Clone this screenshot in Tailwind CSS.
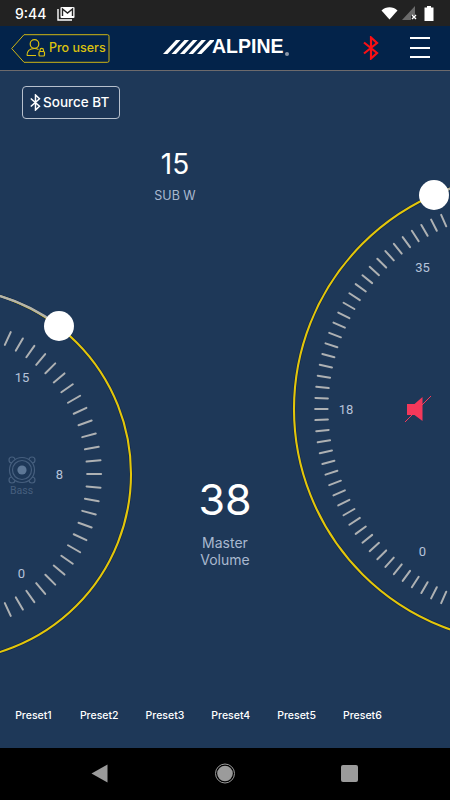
<!DOCTYPE html>
<html lang="en">
<head>
    <meta charset="UTF-8">
    <meta name="viewport" content="width=device-width, initial-scale=1.0">
    <title>Alpine</title>
    <script src="https://cdn.jsdelivr.net/npm/@tailwindcss/browser@4"></script>
</head>
<body class="bg-black">
    <div class="relative w-[450px] h-[800px] overflow-hidden flex flex-col bg-[#1e3858] font-[Inter,sans-serif] text-white">

        <!-- dials -->
        <svg class="absolute inset-0 w-[450px] h-[800px] font-[Roboto,sans-serif]" viewBox="0 0 450 800" fill="none">
            <g id="ticks" stroke="#aeb1b3" stroke-width="2" stroke-linecap="round"></g>
            <circle cx="-55.4" cy="474" r="186.4" stroke="#10264a" stroke-width="3.4"/>
            <circle cx="-55.4" cy="474" r="186.4" stroke="#e3c60a" stroke-width="2.1"/>
            <path d="M-2 295.5 A186.4 186.4 0 0 1 59 326" stroke="#b4b4ac" stroke-width="2.4"/>
            <circle cx="527.6" cy="409" r="233.6" stroke="#10264a" stroke-width="3.4"/>
            <circle cx="527.6" cy="409" r="233.6" stroke="#e3c60a" stroke-width="2.1"/>
            <path d="M434 195 A233.6 233.6 0 0 1 452 188" stroke="#b4b4ac" stroke-width="2.4"/>
            <circle cx="59" cy="326" r="15" fill="#fff"/>
            <circle cx="434" cy="195" r="15" fill="#fff"/>

            <g fill="#b6c3da" font-size="13" text-anchor="middle" dominant-baseline="central">
                <text x="22" y="377">15</text>
                <text x="59.5" y="474.5">8</text>
                <text x="21.5" y="573">0</text>
                <text x="422.5" y="267">35</text>
                <text x="346" y="409.5">18</text>
                <text x="422.5" y="551.5">0</text>
            </g>

            <!-- bass speaker -->
            <g stroke="#465f7e" stroke-width="1.2">
                <circle cx="12" cy="460" r="3"/>
                <circle cx="32" cy="460" r="3"/>
                <circle cx="12" cy="480" r="3"/>
                <circle cx="32" cy="480" r="3"/>
                <circle cx="22" cy="470" r="12.5" fill="#1e3858"/>
                <circle cx="22" cy="470" r="9.5"/>
            </g>
            <circle cx="22" cy="470" r="4.6" fill="#5d7796"/>
            <text x="21.5" y="490.5" fill="#465f7e" font-size="10.5" text-anchor="middle" dominant-baseline="central">Bass</text>

            <!-- muted -->
            <path d="M407 404H414.5L422.5 397V421L414.5 415H407Z" fill="#f4385a"/>
            <path d="M405 422L431 396" stroke="#f4385a" stroke-width="1"/>
        </svg>

        <!-- status bar -->
        <div class="relative h-[26px] shrink-0 bg-[#222222] flex items-center pl-[15px] pr-[16px]">
            <span class="text-[14px] font-medium w-[42px]">9:44</span>
            <svg class="w-[18px] h-[15px]" viewBox="0 0 18 15" fill="none">
                <path d="M1 3V14H15" stroke="#fff" stroke-width="1.4"/>
                <rect x="3.5" y="1" width="14" height="11" rx="1" fill="#fff"/>
                <path d="M5.5 10V3L10.5 7L15.5 3V10" stroke="#222" stroke-width="1.4"/>
            </svg>
            <div class="ml-auto flex items-center gap-[3px]">
                <svg class="w-[17px] h-[13px]" viewBox="0 0 17 13"><path d="M0.5 3.5C5 -0.7 12 -0.7 16.5 3.5L8.5 12.5Z" fill="#fff"/></svg>
                <svg class="w-[16px] h-[14px] ml-[1px]" viewBox="0 0 16 14">
                    <path d="M0 14L13 0V9H9V14Z" fill="#6a6a6a"/>
                    <path d="M10 9L14 13M14 9L10 13" stroke="#fff" stroke-width="1.4"/>
                </svg>
                <svg class="w-[10px] h-[15px] ml-[3px]" viewBox="0 0 10 15">
                    <path d="M3 0H7V1.5H9.5V15H0.5V1.5H3Z" fill="#fff"/>
                </svg>
            </div>
        </div>

        <!-- app bar -->
        <div class="relative h-[45px] shrink-0 bg-[#03234a] border-b border-[#6d6a6c] flex items-center pl-[11px]">
            <div class="relative w-[99px] h-[29px] flex items-center pl-[15px] gap-[2px] text-[#dcc20f]">
                <svg class="absolute inset-0" width="99" height="29" viewBox="0 0 99 29" fill="none">
                    <path d="M0.7 14.5L13 0.7H96.5Q98 0.7 98 2.2V26.8Q98 28.3 96.5 28.3H13Z" stroke="#cfb513" stroke-width="1"/>
                </svg>
                <svg class="w-[20px] h-[20px] shrink-0" viewBox="0 0 20 20" fill="none" stroke="#dcc20f" stroke-width="1.2">
                    <circle cx="8.5" cy="6" r="4.3"/>
                    <path d="M1 17.5C1 13 4 10.5 8.5 10.5C10 10.5 11.5 11 12.5 11.6M1 17.5H10"/>
                    <rect x="13" y="13.5" width="5.5" height="4.5" rx="1"/>
                    <path d="M14 13.5V12.2A1.7 1.7 0 0 1 17.5 12.2V13.5"/>
                </svg>
                <span class="text-[12.5px] font-medium leading-none ml-[1px]">Pro users</span>
            </div>

            <div class="absolute left-[163px] top-[11px] flex items-center">
                <svg class="w-[51px] h-[16px]" viewBox="0 0 51 16" fill="#fff">
                    <path d="M0 15H4.5L17.5 1H13Z"/>
                    <path d="M8.5 15H13L26 1H21.5Z"/>
                    <path d="M17 15H21.5L34.5 1H30Z"/>
                    <path d="M25.5 15H30L43 1H38.5Z"/>
                    <path d="M34 15H38.5L51 2V1H47Z"/>
                </svg>
                <span class="ml-[-2px] font-['Liberation_Sans'] font-bold text-[19.5px] leading-none">ALPINE</span>
                <span class="w-[4px] h-[4px] rounded-full bg-[#8c97a8] self-end mb-[1px] ml-[1px]"></span>
            </div>

            <svg class="absolute left-[362px] top-[10px] w-[18px] h-[24px]" viewBox="0 0 18 24" fill="none" stroke="#fa0f14" stroke-width="2.2">
                <path d="M2 6.5L15 17L9 22.5V1.5L15 7L2 17.5"/>
            </svg>

            <div class="absolute left-[410px] top-[11px] w-[20px] h-[21px] flex flex-col justify-between">
                <div class="h-[2px] bg-white"></div>
                <div class="h-[2px] bg-white"></div>
                <div class="h-[2px] bg-white"></div>
            </div>
        </div>

        <!-- content -->
        <div class="relative flex-1 flex flex-col">
            <div class="mt-[15px] ml-[22px] w-[98px] h-[33px] rounded-[4px] border border-[#b7c0cd] bg-[#1c3556] flex items-center pl-[7px]">
                <svg class="w-[11px] h-[17px] shrink-0" viewBox="0 0 11 17" fill="none" stroke="#fff" stroke-width="1.5">
                    <path d="M0.8 4.5L9.5 12.2L5.5 16V1L9.5 4.8L0.8 12.5"/>
                </svg>
                <span class="text-[13.5px] font-medium leading-none ml-[2px]">Source BT</span>
            </div>

            <div class="w-[100px] ml-[125px] mt-[28px] flex flex-col items-center">
                <span class="text-[28px] leading-[34px]">15</span>
                <span class="text-[12.5px] leading-[16px] mt-[7px] text-[#a9b8cf]">SUB W</span>
            </div>

            <div class="w-[100px] ml-[175px] mt-[269px] flex flex-col items-center">
                <span class="text-[43px] leading-[52px]">38</span>
                <span class="text-[14px] leading-[17px] mt-[9px] text-center text-[#a9b8cf]">Master<br>Volume</span>
            </div>

            <div class="mt-auto mb-[25px] pl-[0.5px] flex text-[10.5px] leading-[14px] font-medium">
                <span class="w-[65.8px] text-center">Preset1</span>
                <span class="w-[65.8px] text-center">Preset2</span>
                <span class="w-[65.8px] text-center">Preset3</span>
                <span class="w-[65.8px] text-center">Preset4</span>
                <span class="w-[65.8px] text-center">Preset5</span>
                <span class="w-[65.8px] text-center">Preset6</span>
            </div>
        </div>

        <!-- android nav -->
        <div class="relative h-[52px] shrink-0 bg-black flex items-center">
            <svg class="absolute left-[91px] top-[16px] w-[17px] h-[19px]" viewBox="0 0 17 19"><path d="M16.5 0.5V18.5L0.5 9.5Z" fill="#9b9b9b"/></svg>
            <svg class="absolute left-[215px] top-[15px] w-[20px] h-[21px]" viewBox="0 0 20 21" fill="none">
                <circle cx="10" cy="10.5" r="9.5" stroke="#9b9b9b" stroke-width="1"/>
                <circle cx="10" cy="10.5" r="7.8" fill="#9b9b9b"/>
            </svg>
            <div class="absolute left-[341px] top-[17px] w-[17px] h-[17px] rounded-[2px] bg-[#9b9b9b]"></div>
        </div>
    </div>

    <script>
        // tick marks round both dials
        const ticks = document.getElementById('ticks');

        function addTicks(cx, cy, inner, outer, step, max, side) {
            for (let a = -max; a <= max; a += step) {
                const rad = a * Math.PI / 180;
                const line = document.createElementNS('http://www.w3.org/2000/svg', 'line');
                line.setAttribute('x1', cx + side * inner * Math.cos(rad));
                line.setAttribute('y1', cy + inner * Math.sin(rad));
                line.setAttribute('x2', cx + side * outer * Math.cos(rad));
                line.setAttribute('y2', cy + outer * Math.sin(rad));
                ticks.appendChild(line);
            }
        }

        addTicks(-55.4, 474, 142.5, 156.5, 5, 70, 1);
        addTicks(527.6, 409, 200, 212.5, 3, 69, -1);
    </script>
</body>
</html>
